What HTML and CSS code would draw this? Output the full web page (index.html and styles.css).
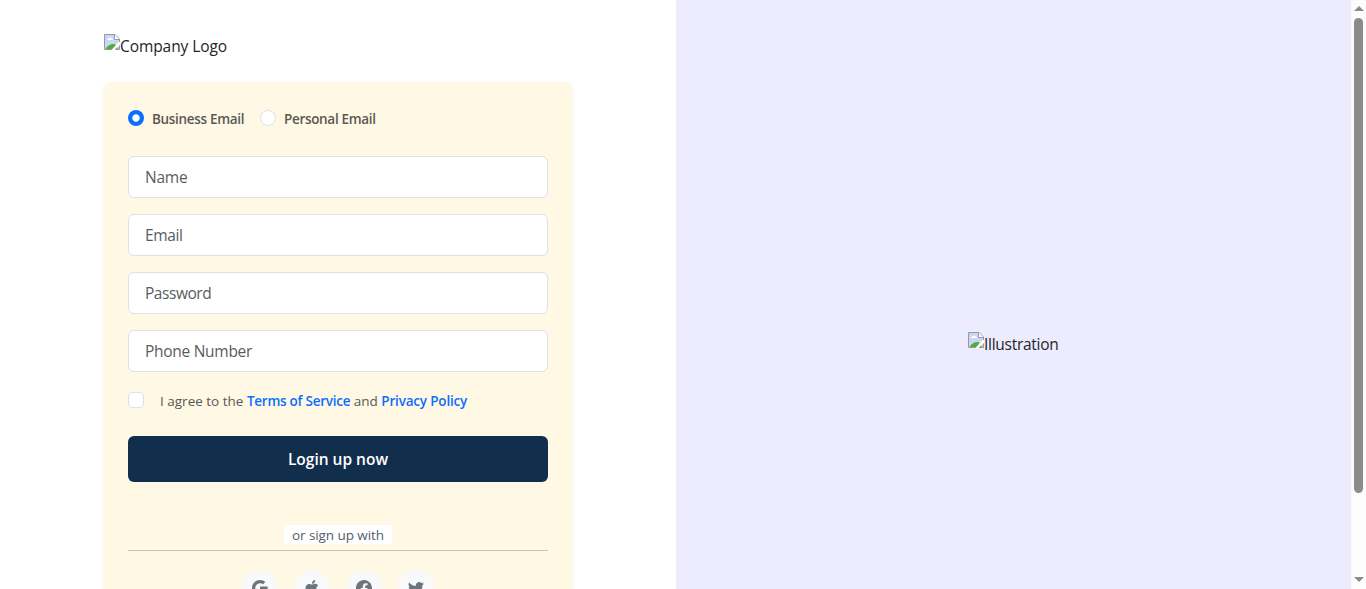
FILE: index.html
```html
<!DOCTYPE html>
<html lang="en">
<head>
<meta charset="utf-8">
<title>Sign up</title>
<link rel="stylesheet" href="styles.css">
</head>
<body>
<svg width="0" height="0" class="defs">
  <symbol id="broken" viewBox="0 0 16 16">
    <path d="M.5 .5H11L15.5 5V15.5H.5Z" fill="#c6d7f7"/>
    <path d="M2 15V14C4 12 6 10 9 10s4 2 5 5Z" fill="#55ab37"/>
    <path d="M3 6c0-1 1-1.500 1.500-1.500C5 3 7 3 7.500 4.500 9 4.500 9 6 9 6Z" fill="#fff"/>
    <path d="M.5 15.500V.5H11L15.500 5V15.500Z" fill="none" stroke="#999"/>
    <path d="M10.500 .5V5.500H15.500" fill="#fff" stroke="#999"/>
    <path class="tear" d="M16 8 14.500 8 7.500 16H10.500L16 11Z"/>
  </symbol>
</svg>
<div class="page">
  <main class="left">
    <div class="column">
      <div class="logo"><svg class="broken"><use href="#broken"/></svg><span class="logo-alt">Company Logo</span></div>
      <form class="card">
        <div class="choices">
          <label class="choice"><i class="radio on"></i><span>Business Email</span></label>
          <label class="choice"><i class="radio"></i><span>Personal Email</span></label>
        </div>
        <div class="field"><span class="f-name">Name</span></div>
        <div class="field"><span class="f-email">Email</span></div>
        <div class="field"><span class="f-pass">Password</span></div>
        <div class="field"><span class="f-phone">Phone Number</span></div>
        <label class="agree"><i class="check"></i><span class="agree-text">I agree to the <b class="terms">Terms of Service</b> and <b class="privacy">Privacy Policy</b></span></label>
        <div class="submit"><span>Login up now</span></div>
        <div class="divider"><span>or sign up with</span></div>
        <div class="socials">
          <a><svg viewBox="0 0 16 16"><path d="M15.545 6.558a9.420 9.420 0 0 1 .139 1.626c0 2.434-.87 4.492-2.384 5.885h.002C11.978 15.292 10.158 16 8 16A8 8 0 1 1 8 0a7.689 7.689 0 0 1 5.352 2.082l-2.284 2.284A4.347 4.347 0 0 0 8 3.166c-2.087 0-3.860 1.408-4.492 3.304a4.792 4.792 0 0 0 0 3.063h.003c.635 1.893 2.405 3.301 4.492 3.301 1.078 0 2.004-.276 2.722-.764h-.003a3.702 3.702 0 0 0 1.599-2.431H8v-3.080h7.545z"/></svg></a>
          <a><svg viewBox="0 0 16 16"><path d="M11.182.008C11.148-.03 9.923.023 8.857 1.180c-1.066 1.156-.902 2.482-.878 2.516s1.520.087 2.475-1.258.762-2.391.728-2.430m3.314 11.733c-.048-.096-2.325-1.234-2.113-3.422s1.675-2.789 1.698-2.854-.597-.790-1.254-1.157a3.700 3.700 0 0 0-1.563-.434c-.108-.003-.483-.095-1.254.116-.508.139-1.653.589-1.968.607-.316.018-1.256-.522-2.267-.665-.647-.125-1.333.131-1.824.328-.490.196-1.422.754-2.074 2.237-.652 1.482-.311 3.830-.067 4.560s.625 1.924 1.273 2.796c.576.984 1.340 1.667 1.659 1.899s1.219.386 1.843.067c.502-.308 1.408-.485 1.766-.472.357.013 1.061.154 1.782.539.571.197 1.111.115 1.652-.105.541-.221 1.324-1.059 2.238-2.758q.520-1.185.473-1.282"/></svg></a>
          <a><svg viewBox="0 0 16 16"><path d="M16 8.049c0-4.446-3.582-8.050-8-8.050C3.580 0-.002 3.603-.002 8.050c0 4.017 2.926 7.347 6.750 7.951v-5.625h-2.030V8.050H6.750V6.275c0-2.017 1.195-3.131 3.022-3.131.876 0 1.791.157 1.791.157v1.980h-1.009c-.993 0-1.303.621-1.303 1.258v1.510h2.218l-.354 2.326H9.250V16c3.824-.604 6.750-3.934 6.750-7.951"/></svg></a>
          <a><svg viewBox="0 0 16 16"><path d="M5.026 15c6.038 0 9.341-5.003 9.341-9.334q.002-.211-.006-.422A6.700 6.700 0 0 0 16 3.542a6.700 6.700 0 0 1-1.889.518 3.300 3.300 0 0 0 1.447-1.817 6.500 6.500 0 0 1-2.087.793A3.286 3.286 0 0 0 7.875 6.030a9.320 9.320 0 0 1-6.767-3.429 3.290 3.290 0 0 0 1.018 4.382A3.300 3.300 0 0 1 .640 6.575v.045a3.290 3.290 0 0 0 2.632 3.218 3.200 3.200 0 0 1-.865.115 3 3 0 0 1-.614-.057 3.280 3.280 0 0 0 3.067 2.277A6.600 6.600 0 0 1 .780 13.580a6 6 0 0 1-.780-.045A9.340 9.340 0 0 0 5.026 15"/></svg></a>
        </div>
      </form>
    </div>
  </main>
  <aside class="right"><div class="illus"><svg class="broken"><use href="#broken"/></svg><span class="illus-alt">Illustration</span></div></aside>
  <div class="scrollbar"><i class="up"></i><i class="thumb"></i><i class="down"></i></div>
</div>
</body>
</html>
```
FILE: styles.css
```css
* { box-sizing: border-box; }
body { margin: 0; overflow: hidden; background: #fff; color: #212529; font: 15.5px/24px "Segoe UI", "Open Sans", "Noto Sans", sans-serif; }
.defs { position: absolute; }
.page { display: flex; height: 589px; overflow: hidden; }
.left { width: 676px; flex: none; padding: 34px 102px 0; }
.column { width: 472px; }
.logo, .illus { display: flex; height: 24px; white-space: nowrap; }
.logo { padding-left: 2px; height: 48px; }
.broken { width: 16px; height: 16px; flex: none; }
.tear { fill: #fff; }
.logo-alt { letter-spacing: -.08px; }
.illus-alt { letter-spacing: -.28px; }
.card { height: 560px; margin-left: 1px; width: 470px; padding: 24px 25px 0; background: #fff8e5; border-radius: 8px; box-shadow: 0 2px 4px rgba(0,0,40,.03); }
.choices { display: flex; height: 50px; }
.choice { display: flex; width: 132px; font-size: 13.5px; line-height: 21px; font-weight: 600; color: #5a5853; padding-top: 3px; white-space: nowrap; letter-spacing: -.32px; }
.radio { width: 16px; height: 16px; margin: 1px 8px 0 0; border: 1px solid #dee2e6; border-radius: 50%; background: #fff; flex: none; }
.radio.on { border: 0; background: radial-gradient(circle, #fff 3.200px, #0d6efd 4.200px); }
.field { height: 42px; margin-bottom: 16px; border: 1px solid #dee2e6; border-radius: 6px; background: #fff; padding: 8px 16px; color: #595c5f; }
.f-name { letter-spacing: -.25px; }
.f-email { letter-spacing: -.35px; }
.f-pass { letter-spacing: -.45px; }
.f-phone { letter-spacing: -.28px; }
.agree { display: flex; height: 48px; font-size: 13.5px; line-height: 21px; color: #5a5853; padding-top: 2px; white-space: nowrap; }
.check { width: 16px; height: 16px; margin: 2px 16px 0 0; border: 1px solid #dee2e6; border-radius: 4px; background: #fff; flex: none; }
.agree-text { padding-top: 1px; }
.agree b { color: #0d6efd; font-weight: 600; }
.terms { letter-spacing: -.25px; }
.privacy { letter-spacing: -.18px; }
.submit { height: 46px; background: #122e4d; border-radius: 6px; color: #fff; font-weight: 600; text-align: center; padding-top: 11px; }
.divider { margin-top: 43px; height: 26px; border-bottom: 1px solid #cbc3b1; display: flex; justify-content: center; align-items: flex-start; }
.divider span { width: 108px; height: 19px; background: #fff; font-size: 13.5px; line-height: 21px; letter-spacing: -.07px; color: #555f68; text-align: center; white-space: nowrap; }
.socials { display: flex; justify-content: center; gap: 16px; margin-top: 19px; }
.socials a { width: 36px; height: 36px; border-radius: 50%; background: #f8f9fa; display: grid; place-items: center; }
.socials svg { width: 16px; height: 16px; fill: #6c757d; }
.right { width: 675px; flex: none; background: #edebfe; padding-top: 332px; display: flex; justify-content: center; align-items: flex-start; }
.right .tear { fill: #edebfe; }
.illus { width: 91px; }
.scrollbar { width: 15px; background: #fcfcfc; display: flex; flex-direction: column; align-items: center; flex: none; }
.scrollbar i { flex: none; }
.up { width: 0; height: 0; margin-top: 6px; border: 5px solid transparent; border-top: 0; border-bottom: 5px solid #8b8b8b; }
.thumb { width: 9px; height: 475px; margin-top: 7px; background: #8b8b8b; border-radius: 5px; }
.down { width: 0; height: 0; margin-top: 84px; border: 5px solid transparent; border-bottom: 0; border-top: 5px solid #8b8b8b; }
```
